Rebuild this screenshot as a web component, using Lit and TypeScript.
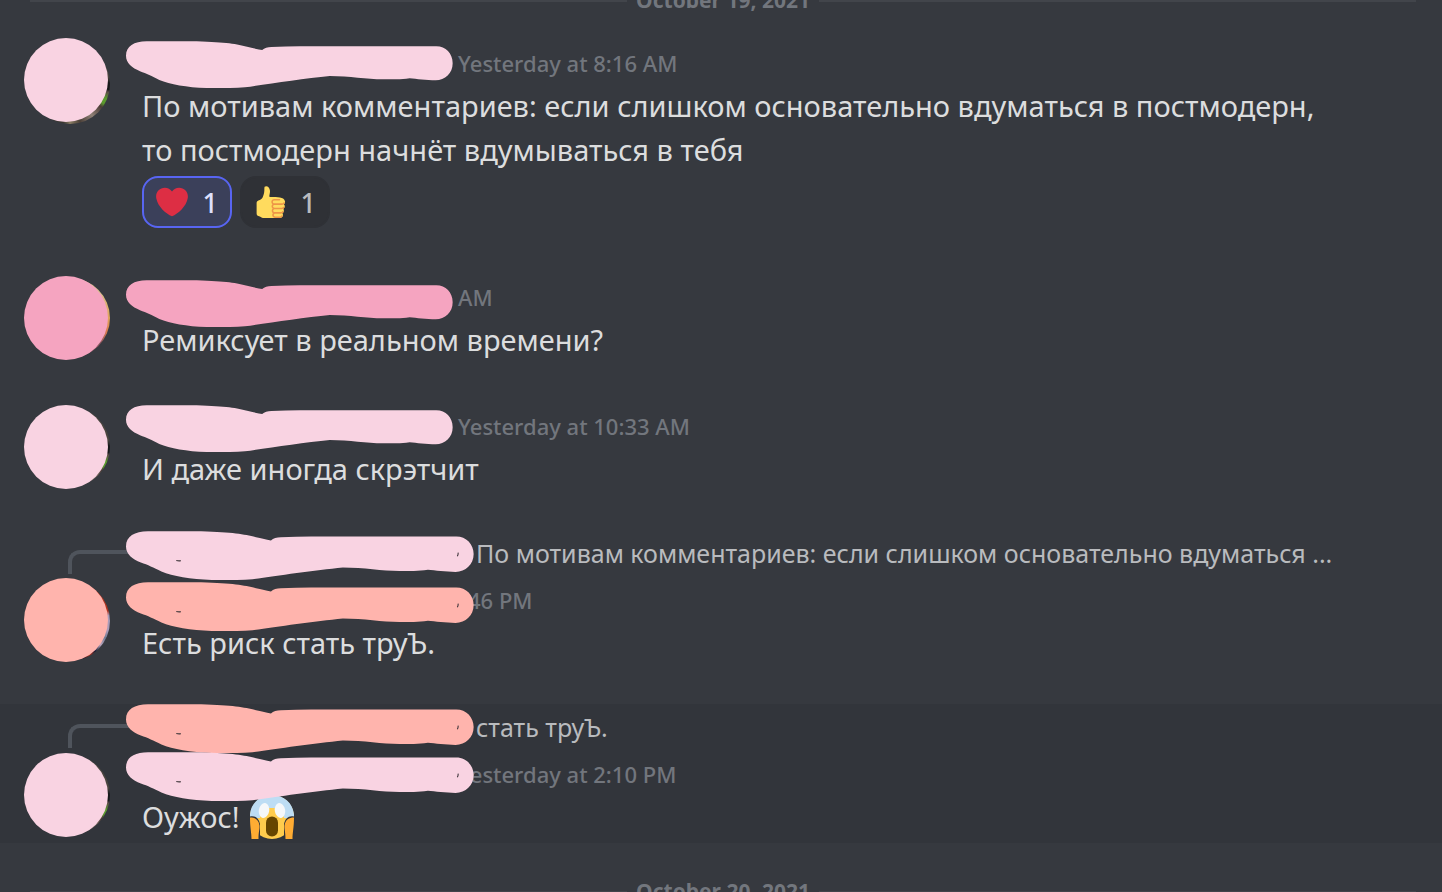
import { LitElement, html, css, svg, nothing } from "lit";
import { customElement, property } from "lit/decorators.js";

type Tone = "blush" | "rose" | "coral";

interface Mark {
  tone: Tone;
  top: number;
  wide?: boolean;
}

interface Message {
  id: string;
  photo: string;
  cover: Mark;
  marks: Mark[];
  nameWidth: number;
  time: string;
  lines: string[];
  reply?: string;
  reactions?: boolean;
  scream?: boolean;
  active?: boolean;
}

const MESSAGES: Message[] = [
  {
    id: "m1",
    photo: "forest",
    cover: { tone: "blush", top: 0 },
    marks: [{ tone: "blush", top: 3 }],
    nameWidth: 316,
    time: "Yesterday at 8:16 AM",
    lines: [
      "По мотивам комментариев: если слишком основательно вдуматься в постмодерн,",
      "то постмодерн начнёт вдумываться в тебя",
    ],
    reactions: true,
  },
  {
    id: "m2",
    photo: "sunset",
    cover: { tone: "rose", top: 4 },
    marks: [{ tone: "rose", top: 8 }],
    nameWidth: 316,
    time: "AM",
    lines: ["Ремиксует в реальном времени?"],
  },
  {
    id: "m3",
    photo: "forest",
    cover: { tone: "blush", top: 4 },
    marks: [{ tone: "blush", top: 4 }],
    nameWidth: 316,
    time: "Yesterday at 10:33 AM",
    lines: ["И даже иногда скрэтчит"],
  },
  {
    id: "m4",
    photo: "dusk",
    cover: { tone: "coral", top: 48 },
    marks: [
      { tone: "blush", top: 1, wide: true },
      { tone: "coral", top: 52, wide: true },
    ],
    nameWidth: 326,
    time: "46 PM",
    lines: ["Есть риск стать труЪ."],
    reply: "По мотивам комментариев: если слишком основательно вдуматься ...",
  },
  {
    id: "m5",
    photo: "forest",
    cover: { tone: "blush", top: 49 },
    marks: [
      { tone: "coral", top: 0, wide: true },
      { tone: "blush", top: 48, wide: true },
    ],
    nameWidth: 316,
    time: "Yesterday at 2:10 PM",
    lines: ["Оужос!"],
    reply: "стать труЪ.",
    scream: true,
    active: true,
  },
];

const heart = html`<svg class="emoji" viewBox="0 0 36 36" aria-hidden="true">
  <path fill="#dd2e44" d="M35.885 11.833c0-5.45-4.418-9.868-9.867-9.868-3.308 0-6.227 1.633-8.018 4.129-1.791-2.496-4.71-4.129-8.017-4.129-5.45 0-9.868 4.417-9.868 9.868 0 .772.098 1.52.266 2.241C1.751 22.587 11.216 31.568 18 34.034c6.783-2.466 16.249-11.447 17.617-19.959.17-.721.268-1.469.268-2.242z"/>
</svg>`;

const thumb = html`<svg class="emoji" viewBox="0 0 36 36" aria-hidden="true">
  <path fill="#ffdb5e" d="M34.956 17.916c0-.503-.12-.975-.321-1.404-1.341-4.326-7.619-4.01-16.549-4.221-1.493-.035-.639-1.798-.115-5.668.341-2.517-1.282-6.382-4.01-6.382-4.498 0-.171 3.548-4.148 12.322-2.125 4.688-6.875 2.062-6.875 6.771v10.719c0 1.833.18 3.595 2.758 3.885C8.195 34.219 7.633 36 11.238 36h18.044c1.838 0 3.333-1.496 3.333-3.334 0-.762-.267-1.456-.698-2.018 1.02-.571 1.72-1.649 1.72-2.899 0-.76-.266-1.454-.696-2.015 1.023-.57 1.725-1.649 1.725-2.901 0-.909-.368-1.733-.961-2.336.757-.611 1.251-1.535 1.251-2.581z"/>
  <path fill="#ee9547" d="M23.02 21.249h8.604c1.17 0 2.268-.626 2.866-1.633.246-.415.109-.952-.307-1.199-.415-.247-.952-.108-1.199.307-.283.479-.806.775-1.361.775h-8.81c-.873 0-1.583-.71-1.583-1.583s.71-1.583 1.583-1.583H28.7c.483 0 .875-.392.875-.875s-.392-.875-.875-.875h-5.888c-1.838 0-3.333 1.495-3.333 3.333 0 1.025.475 1.932 1.205 2.544-.615.605-.998 1.445-.998 2.373 0 1.028.478 1.938 1.212 2.549-.611.604-.99 1.441-.99 2.367 0 1.12.559 2.108 1.409 2.713-.524.589-.852 1.356-.852 2.204 0 1.838 1.495 3.333 3.333 3.333h5.484c1.17 0 2.269-.625 2.867-1.632.247-.415.11-.952-.305-1.199-.416-.245-.953-.11-1.199.305-.285.479-.808.776-1.363.776h-5.484c-.873 0-1.583-.71-1.583-1.583s.71-1.583 1.583-1.583h6.506c1.17 0 2.27-.626 2.867-1.633.247-.416.11-.953-.305-1.199-.419-.251-.954-.11-1.199.305-.289.487-.799.777-1.363.777h-7.063c-.873 0-1.583-.711-1.583-1.584s.71-1.583 1.583-1.583h8.091c1.17 0 2.269-.625 2.867-1.632.247-.415.11-.952-.305-1.199-.417-.246-.953-.11-1.199.305-.289.486-.799.776-1.363.776H23.02c-.873 0-1.583-.71-1.583-1.583s.71-1.584 1.583-1.584z"/>
</svg>`;

const scream = html`<svg class="scream" viewBox="0 0 44 44" role="img" aria-label="scream">
  <circle cx="22" cy="22" r="22" fill="#ffcc4d"/>
  <path fill="#bdddf4" d="M0 23C-1 10 9 0 22 0s23 10 22 23H34c0-6-4-9-9-10h-6c-5 1-9 4-9 10z"/>
  <ellipse cx="14" cy="15.500" rx="5.200" ry="7.500" fill="#f5f8fa" transform="rotate(10 14 15.500)"/>
  <ellipse cx="30" cy="15.500" rx="5.200" ry="7.500" fill="#f5f8fa" transform="rotate(-10 30 15.500)"/>
  <rect x="16" y="21.500" width="12" height="20" rx="6" fill="#664500"/>
  <path fill="#31343a" d="M0 44V21.500c5-1.500 9 2 10 7.500V44zM44 44V21.500c-5-1.500-9 2-10 7.500V44z"/>
  <path fill="#ffac33" d="M0 22.500c5 0 8.500 2 9.500 8 .3 4-1 6-1 13.500H1.500C1.500 37 0 33 0 22.500zM44 22.500c-5 0-8.500 2-9.500 8-.3 4 1 6 1 13.500h7c0-7 1.500-11 1.500-21.500z"/>
</svg>`;

@customElement("paint-mark")
export class PaintMark extends LitElement {
  @property() tone: Tone = "blush";
  @property({ type: Boolean }) wide = false;

  static styles = css`
    :host { display: block; }
    .stroke { display: block; width: 327px; height: 47px; }
    .stroke.wide { width: 348px; height: 49px; }
    .blush { fill: #f9d3e2; }
    .rose { fill: #f5a4c0; }
    .coral { fill: #ffb4ad; }
    .speck { fill: none; stroke: #3b3337; stroke-width: 3; }
  `;

  render() {
    return html`<svg class="stroke ${this.wide ? "wide" : ""}" viewBox="378 124 982 140" preserveAspectRatio="none" aria-hidden="true">
      <path class=${this.tone} d="M378 168C378 140 402 125 440 125H590C680 128 710 133 745 142Q775 149 787 151Q797 142 815 142Q860 140 900 140H1310C1338 140 1359 162 1359 190C1359 220 1336 241 1308 241C1280 241 1250 237 1230 235C1215 237 1205 238 1190 238H1150C1100 238 1050 228 990 228C910 236 800 252 735 262Q715 264 690 264H620C560 262 510 253 478 240C455 228 440 221 420 214C396 204 378 190 378 168Z"/>
      ${this.wide ? svg`<path class="speck" d="M520 208q6 2 13 1M1315 186q1 5-2 10"/>` : nothing}
    </svg>`;
  }
}

@customElement("app-root")
export class AppRoot extends LitElement {
  static styles = css`
    :host {
      display: block;
      height: 100vh;
      overflow: hidden;
      background: #36393f;
      color: #dcddde;
      font-family: "Noto Sans", "Open Sans", sans-serif;
    }
    .divider {
      display: flex;
      align-items: center;
      gap: 9px;
      height: 2px;
      padding: 0 26px 0 30px;
      color: #72767d;
      font-size: 21px;
      font-weight: 700;
      line-height: 28px;
      white-space: nowrap;
    }
    .divider span { padding-bottom: 2px; }
    .divider::before, .divider::after {
      content: "";
      flex: 1;
      height: 2px;
      background: #42454b;
    }
    .log {
      display: flex;
      flex-direction: column;
      gap: 35px;
      margin: 36px 0 48px;
      padding: 0;
      list-style: none;
    }
    .message {
      position: relative;
      padding: 4px 96px 4px 142px;
    }
    .message.active { background: #32353b; }
    .main { position: relative; }
    .photo {
      position: absolute;
      left: -112px;
      top: 2px;
      width: 80px;
      height: 80px;
      border-radius: 50%;
    }
    .forest { background: conic-gradient(#4b453f 80deg, #17181a 88deg 98deg, #5a4b46 102deg, #5b9a2d 112deg 120deg, #4a3b35 126deg, #8d7f75 145deg, #4b4038 165deg, #8a7d63 180deg, #3a3731 190deg); }
    .sunset { background: conic-gradient(#d9c08c 50deg, #e0a35a 90deg, #d97b4e 110deg, #8b5560 130deg); }
    .dusk { background: conic-gradient(#b0341f 75deg, #a99bb8 82deg 105deg, #6f7a92 115deg, #b9a4bc 128deg, #141a33 140deg, #b5301d 150deg, #191424 160deg); }
    .head {
      display: flex;
      align-items: center;
      height: 42px;
      color: #72767d;
      font-size: 22px;
      font-weight: 500;
      white-space: nowrap;
    }
    .line { margin: 0; font-size: 29px; line-height: 44px; white-space: nowrap; }
    .reply {
      display: flex;
      align-items: center;
      height: 37px;
      margin-bottom: 8px;
      padding-left: 334px;
      color: #b9bbbe;
      font-size: 25px;
      white-space: nowrap;
    }
    .spine {
      position: absolute;
      left: 68px;
      top: 20px;
      width: 60px;
      height: 20px;
      border: solid #4f545c;
      border-width: 4px 0 0 4px;
      border-top-left-radius: 12px;
    }
    .scream { width: 44px; height: 44px; vertical-align: top; margin-left: 10px; }
    .reactions { display: flex; gap: 8px; padding: 4px 0 5px; }
    .reaction {
      display: flex;
      align-items: center;
      justify-content: space-between;
      box-sizing: border-box;
      width: 90px;
      height: 52px;
      padding: 0 12px;
      border: 2px solid #2f3136;
      border-radius: 16px;
      background: #2f3136;
      color: #b9bbbe;
      font: 500 27px "Noto Sans", sans-serif;
    }
    .reaction.mine { border-color: #5865f2; background: #3b405a; color: #dee0fc; }
    .emoji { width: 32px; height: 32px; }
    .cover {
      position: absolute;
      left: 24px;
      width: 84px;
      height: 84px;
      border-radius: 50%;
    }
    .cover.blush { background: #f9d3e2; }
    .cover.rose { background: #f5a4c0; }
    .cover.coral { background: #ffb4ad; }
    .mark { position: absolute; left: 126px; }
  `;

  private message(m: Message) {
    return html`<li class="message ${m.active ? "active" : ""}">
      ${m.reply ? html`<span class="spine"></span><div class="reply">${m.reply}</div>` : nothing}
      <div class="main">
        <div class="photo ${m.photo}"></div>
        <div class="head"><span style="width:${m.nameWidth}px"></span><time>${m.time}</time></div>
        ${m.lines.map((text) => html`<p class="line">${text}${m.scream ? scream : nothing}</p>`)}
        ${m.reactions
          ? html`<div class="reactions">
              <button class="reaction mine" aria-pressed="true">${heart}<span>1</span></button>
              <button class="reaction" aria-pressed="false">${thumb}<span>1</span></button>
            </div>`
          : nothing}
      </div>
      <span class="cover ${m.cover.tone}" style="top:${m.cover.top}px"></span>
      ${m.marks.map((k) => html`<paint-mark class="mark" style="top:${k.top}px" tone=${k.tone} ?wide=${k.wide}></paint-mark>`)}
    </li>`;
  }

  render() {
    return html`
      <div class="divider"><span>October 19, 2021</span></div>
      <ol class="log">${MESSAGES.map((m) => this.message(m))}</ol>
      <div class="divider"><span>October 20, 2021</span></div>
    `;
  }
}
